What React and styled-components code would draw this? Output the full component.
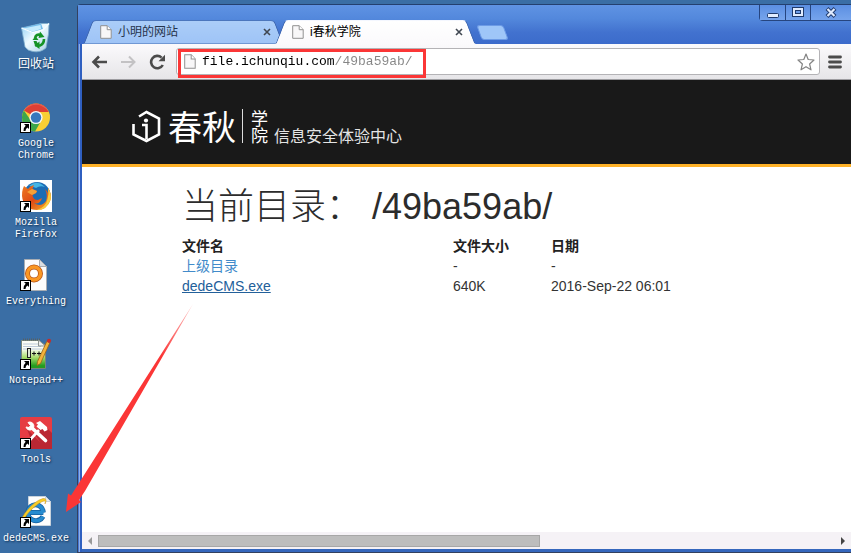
import React from "react";
import styled, { createGlobalStyle, css } from "styled-components";

const GlobalStyle = createGlobalStyle`
  *, *::before, *::after { box-sizing: border-box; }
  body {
    margin: 0;
    background: #3a6ea5;
    font-family: "Liberation Sans", "Noto Sans CJK SC", sans-serif;
    font-size: 14px;
  }
  button, input { font: inherit; color: inherit; margin: 0; padding: 0; border: 0; background: none; }
  svg { display: block; flex: none; }
`;

const Desktop = styled.div`
  position: relative;
  display: flex;
  height: 100vh;
  overflow: hidden;
  background: #3a6ea5;
`;

const IconColumn = styled.nav`
  display: flex;
  flex-direction: column;
  flex: none;
  width: 72px;
  margin-right: 5px;
  padding-top: 22px;
`;

const Shortcut = styled.button`
  display: flex;
  flex-direction: column;
  align-items: center;
  gap: 5px;
  min-height: 79px;
  &:last-child { min-height: 0; }
`;

const ShortcutLabel = styled.span`
  font-family: "Liberation Mono", "Noto Sans CJK SC", monospace;
  font-size: ${(p) => (p.$cjk ? "12px" : "10px")};
  line-height: 12px;
  color: #fff;
  text-shadow: 1px 1px 2px #0a2a4c;
`;

const BrowserWindow = styled.main`
  display: flex;
  flex-direction: column;
  flex: 1;
  min-width: 0;
  margin-top: 4px;
  border-left: 1px solid #33415f;
  border-top: 1px solid #24406f;
  border-bottom: 1px solid #33415f;
  border-top-left-radius: 4px;
  padding: 0 0 3px 4px;
  background: linear-gradient(90deg, #4a78d4 0 1px, #8fb0e8 1px 2px, #2f5fc0 2px 4px, #3567bd 4px);
`;

const TabStrip = styled.header`
  display: flex;
  align-items: flex-end;
  height: 39px;
  margin-left: -4px;
  padding-left: 10px;
  background: linear-gradient(#5f93e3, #5388dc 35%, #4272cf 70%, #3c6bcb);
`;

const Tabs = styled.div`
  display: flex;
  align-items: flex-end;
  gap: 1px;
`;

const tabSide = css`
  content: "";
  position: absolute;
  z-index: -1;
  top: 0;
  bottom: 0;
  width: 54%;
  border-top: 1px solid ${(p) => (p.$active ? "#f4f7ff" : "#4b76bd")};
  border-bottom: 1px solid ${(p) => (p.$active ? "#fbfafc" : "#7098d4")};
  background: ${(p) => (p.$active ? "linear-gradient(#fff, #fbfafc)" : "linear-gradient(#abcdf8, #9fc4f6)")};
`;

const Tab = styled.div`
  position: relative;
  z-index: ${(p) => (p.$active ? 2 : 1)};
  display: flex;
  align-items: center;
  gap: 6px;
  width: 191px;
  height: 24px;
  padding: 0 8px 0 12px;
  font-size: 12px;
  line-height: 16px;
  color: ${(p) => (p.$active ? "#000" : "#26344c")};
  &::before {
    ${tabSide}
    left: 0;
    transform: skewX(-21deg);
    border-top-left-radius: 4px;
    border-left: 1px solid #4066aa;
  }
  &::after {
    ${tabSide}
    right: 0;
    transform: skewX(21deg);
    border-top-right-radius: 4px;
    border-right: 1px solid #4066aa;
  }
`;

const TabTitle = styled.span`
  flex: 1;
  white-space: nowrap;
`;

const PlainButton = styled.button`
  display: flex;
  align-items: center;
  justify-content: center;
  flex: none;
`;

const NewTab = styled.button`
  width: 27px;
  height: 15px;
  margin: 0 0 4px 8px;
  border: 1px solid #6d9be6;
  border-radius: 3px;
  background: #9fc6f8;
  transform: skewX(20deg);
`;

const WindowControls = styled.div`
  display: flex;
  align-self: flex-start;
  margin-left: auto;
  border-left: 1px solid #26457f;
  border-bottom: 1px solid #26457f;
  border-bottom-left-radius: 4px;
`;

const ControlButton = styled.button`
  display: flex;
  align-items: center;
  justify-content: center;
  width: ${(p) => (p.$wide ? "41px" : "25px")};
  height: 15px;
  background: linear-gradient(#5b8fe2, #76a4ec);
  & + & { border-left: 1px solid #26457f; }
`;

const Toolbar = styled.div`
  display: flex;
  align-items: center;
  height: 36px;
  padding: 0 9px;
  border-bottom: 1px solid #9d9ca0;
  background: linear-gradient(#fbfafc, #e6e5e8);
`;

const NavButtons = styled.div`
  display: flex;
  gap: 12px;
  margin-right: 10px;
`;

const AddressBar = styled.form`
  position: relative;
  display: flex;
  align-items: center;
  flex: 1;
  min-width: 0;
  gap: 6px;
  height: 27px;
  margin-right: 8px;
  padding: 0 4px 0 7px;
  border: 1px solid #b4b3b6;
  border-radius: 3px;
  background: #fff;
`;

const UrlInput = styled.input`
  flex: 1;
  min-width: 0;
  height: 22px;
  font-family: "Liberation Mono", monospace;
  font-size: 13px;
  line-height: 22px;
  color: #000;
  outline: 0;
  background: linear-gradient(90deg, #000 17ch, #858585 17ch);
  background-clip: text;
  -webkit-text-fill-color: transparent;
`;

const UrlHighlight = styled.span`
  position: absolute;
  top: 0;
  left: 1px;
  width: 248px;
  height: 29px;
  border: 3px solid #fb3636;
  pointer-events: none;
`;

const SiteHeader = styled.header`
  display: flex;
  align-items: flex-start;
  flex: none;
  height: 87px;
  padding: 29px 0 0 50px;
  border-bottom: 3px solid #ffb228;
  background: #191919;
  color: #fff;
  font-family: "Noto Sans CJK SC", sans-serif;
  font-weight: 300;
  white-space: nowrap;
`;

const Brand = styled.span`
  margin-left: 6px;
  padding-right: 6px;
  border-right: 1px solid #ddd;
  font-size: 34px;
  font-weight: 400;
  line-height: 34px;
`;

const BrandSuffix = styled.span`
  width: 17px;
  margin: 0 6px 0 8px;
  font-size: 17px;
  line-height: 17px;
  font-weight: 400;
  white-space: normal;
`;

const Tagline = styled.span`
  align-self: flex-start;
  margin-top: 18px;
  font-size: 16px;
  line-height: 17px;
  font-weight: 400;
  color: #e4e4e4;
`;

const Page = styled.section`
  flex: 1;
  min-height: 0;
  padding: 20px 20px 0 100px;
  overflow: hidden;
  background: #fff;
  color: #333;
`;

const Heading = styled.h1`
  margin: 0 0 9px;
  font-size: 36px;
  font-weight: 300;
  line-height: 40px;
  color: #2c2c2c;
`;

const FileTable = styled.table`
  border-collapse: collapse;
  line-height: 20px;
  text-align: left;
  th, td { padding: 0; height: 20px; line-height: 20px; }
  th { color: #222; font-weight: 700; }
  th:nth-child(1) { width: 271px; }
  th:nth-child(2) { width: 98px; }
`;

const FileLink = styled.a`
  color: ${(p) => (p.$hovered ? "#23609a" : "#428bca")};
  text-decoration: ${(p) => (p.$hovered ? "underline" : "none")};
`;

const ScrollBar = styled.div`
  display: flex;
  align-items: center;
  flex: none;
  height: 17px;
  background: #f5f2f6;
`;

const ScrollButton = styled(PlainButton)`
  width: 16px;
  height: 17px;
`;

const ScrollTrack = styled.div`
  flex: 1;
`;

const ScrollThumb = styled.div`
  width: 60%;
  height: 12px;
  border: 1px solid #a7a7a7;
  background: #bdbdbd;
`;

const ArrowOverlay = styled.svg`
  position: absolute;
  left: 66px;
  top: 304px;
  pointer-events: none;
`;

const ShortcutMark = () => (
  <g>
    <rect x="0.5" y="21.5" width="10" height="10" fill="#fff" stroke="#000" />
    <path d="M4 23h5v5l-1.500-1.500Q5.500 27.500 5.500 30H3.500Q3 27 5.700 24.800Z" fill="#000" />
  </g>
);

const RecycleIcon = () => (
  <svg width="32" height="32" viewBox="0 0 32 32">
    <defs>
      <linearGradient id="bin" x1="0" x2="1" y2="1">
        <stop offset="0" stopColor="#8fd0f5" />
        <stop offset="0.45" stopColor="#eefaff" />
        <stop offset="1" stopColor="#a9cfe6" />
      </linearGradient>
    </defs>
    <path d="M1.500 6 21 1.500 29 1.500 28.500 12 26 26Q20 31 13 29.500 8 29 5 25Z" fill="url(#bin)" stroke="#7caccc" strokeWidth="0.800" />
    <path d="M1.500 6 21 1.500 23 7 13 11Z" fill="#73bcec" />
    <path d="M3 6.500 20.500 3 21 7 13 9.500Z" fill="#c6ebfd" />
    <path d="M1.500 6 13 10.500 23 8 29 1.500" fill="none" stroke="#f5fcff" strokeWidth="1.300" />
    <g fill="none" stroke="#159326" strokeWidth="2.600">
      <path d="M15 16q1-4.500 6-3" />
      <path d="M24 17q0 5-4 6.500h-2" />
    </g>
    <path d="m20 9.500 4.500 5.500-6 1zM19.500 19.500v7.500l-5-3.500zM12.500 18l3-4 3 4zM13.500 19h3l2 4-3 2z" fill="#159326" />
  </svg>
);

const ChromeIcon = () => (
  <svg width="32" height="32" viewBox="0 0 32 32">
    <circle cx="16" cy="16.500" r="14" fill="#f8cf35" />
    <path d="M16 16.500 3.900 9.500A14 14 0 0 1 28.800 11H16Z" fill="#dd3f34" />
    <path d="M3.900 9.500A14 14 0 0 0 15 30.500L21 20 16 16.500 10.500 19Z" fill="#3da64b" />
    <path d="M4 9.500A14 14 0 0 1 28 9.500Q16-2 4 9.500Z" fill="#ee7468" opacity=".6" />
    <circle cx="16" cy="16.500" r="6.600" fill="#f5f7fa" />
    <circle cx="16" cy="16.500" r="5.200" fill="#3777bd" />
    <ShortcutMark />
  </svg>
);

const FirefoxIcon = () => (
  <svg width="32" height="32" viewBox="0 0 32 32">
    <defs>
      <linearGradient id="fox" x1="0" y1="0" x2="1" y2="1">
        <stop offset="0" stopColor="#ee7b20" />
        <stop offset="0.5" stopColor="#df4a16" />
        <stop offset="1" stopColor="#f5b728" />
      </linearGradient>
    </defs>
    <rect width="32" height="32" fill="#fff" />
    <circle cx="17" cy="15.500" r="13.500" fill="#1c6cb4" />
    <path d="M9 6Q17-1 25 7 20 5 16 8 12 6 9 6Z" fill="#46b5e5" />
    <path d="M4 6 8 9Q10 6 14 5L12.500 9 17 11 16 13 12.500 15Q13 20 18 20L22 18Q20 25 14 23 21 28 26 21 28 15 25 9 27 11 28 13L28 8Q32 14 30.500 20 27 30 17 30 5 30 2.500 19 1 12 4 6Z" fill="url(#fox)" />
    <path d="M28 8Q32 14 30.500 20 27 30 17 30 26 27 27.500 19 29 14 28 8Z" fill="#f9cb3b" />
    <path d="m7 12 5-3 5 2-1 2-4 2Z" fill="#f6a137" />
    <ShortcutMark />
  </svg>
);

const EverythingIcon = () => (
  <svg width="32" height="32" viewBox="0 0 32 32">
    <path d="M4.500.5h15l7 7v24h-22Z" fill="#fcfcfc" stroke="#a8adb3" />
    <path d="M19.500.5v7h7Z" fill="#d9dde2" stroke="#a8adb3" />
    <circle cx="14" cy="14.500" r="6.500" fill="#fff" stroke="#b65418" strokeWidth="5" />
    <circle cx="14" cy="14.500" r="6.500" fill="none" stroke="#fa9723" strokeWidth="3.400" />
    <ShortcutMark />
  </svg>
);

const NotepadIcon = () => (
  <svg width="32" height="32" viewBox="0 0 32 32">
    <defs>
      <linearGradient id="note" x1="0" y1="0" x2="0" y2="1">
        <stop offset="0.3" stopColor="#fbfdf6" />
        <stop offset="0.6" stopColor="#a8dd6c" />
        <stop offset="0.9" stopColor="#249b20" />
      </linearGradient>
    </defs>
    <path d="M1.500 2.500h17l7 5v23h-24Z" fill="url(#note)" stroke="#77857a" />
    <path d="M3 1.500h17" stroke="#576064" strokeWidth="2" strokeDasharray="1 1" />
    <path d="M3 6h17M3 8.500h18M3 11h20" stroke="#bdcad9" />
    <path d="M18.500 2v6h7Z" fill="#eee" stroke="#8b938d" />
    <rect x="7.500" y="10.500" width="3" height="9" fill="#d9e5d2" stroke="#222" />
    <path d="M12 15.500h4m-2-2v4m3-2h4m-2-2v4" stroke="#111" />
    <path d="m27 3 3 1.500-9.500 21-3.500 2 .5-4Z" fill="#f3b33a" stroke="#9a6213" strokeWidth=".8" />
    <circle cx="29" cy="2.800" r="2.100" fill="#c42d2a" />
    <ShortcutMark />
  </svg>
);

const ToolsIcon = () => (
  <svg width="32" height="32" viewBox="0 0 32 32">
    <rect width="32" height="32" rx="2" fill="#e63c43" />
    <path d="M7 12 27 32H10V20ZM24 8l8 8v16h-7L13 15Z" fill="#ba2733" />
    <path d="m12 11 13.500 12.500" stroke="#fff" strokeWidth="3.600" strokeLinecap="round" />
    <path d="M8 5.500a4 4 0 1 1-2 4.500l3 .5 1.500-2Z" fill="#fff" stroke="#fff" />
    <path d="M19 13 8.500 24.500" stroke="#fff" strokeWidth="2.600" />
    <path d="m16 6 4-2 7 6 .5 3-3 1.500-2-2.500-2 1-4-3.500 1.500-2Z" fill="#fff" />
    <ShortcutMark />
  </svg>
);

const ExplorerIcon = () => (
  <svg width="32" height="32" viewBox="0 0 32 32">
    <path d="M8.500.5h17l5 5v24h-22Z" fill="#fdfdfd" stroke="#c9d3dc" />
    <path d="M25.500.5v5h5Z" fill="#e7edf2" stroke="#c9d3dc" />
    <path d="M23.300 16.500H9M8 16A7.700 8.500 0 0 1 23.300 16.500M23 20.500A8 8 0 0 1 8 16" fill="none" stroke="#155f9f" strokeWidth="5" />
    <path d="M23.300 16.500H9M8 16A7.700 8.500 0 0 1 23.300 16.500M23 20.500A8 8 0 0 1 8 16" fill="none" stroke="#258bd0" strokeWidth="3.500" />
    <path d="M2.500 30Q-2 27 5 17 14 5 23 2.500 28 2 25 8 27 2 18 8 6 17 3 26Z" fill="#f8cc27" stroke="#c9951d" strokeWidth=".5" />
    <ShortcutMark />
  </svg>
);

const PageIcon = ({ tall }) => (
  <svg width="12" height={tall ? 15 : 14} viewBox="0 0 12 14" preserveAspectRatio="none">
    <path d="M.7.700h6.500l4 4v8.600H.7Z" fill="#f8f7f8" stroke="#919191" />
    <path d="M7.200.7v4h4" fill="#fff" stroke="#919191" />
  </svg>
);

const CloseIcon = () => (
  <svg width="8" height="8" viewBox="0 0 8 8">
    <path d="m1 1 6 6m0-6L1 7" stroke="#404751" strokeWidth="1.600" />
  </svg>
);

const ArrowIcon = ({ forward }) => (
  <svg width="17" height="16" viewBox="0 0 17 16">
    <path
      d={forward ? "M1 8h13M9 2.500 14.500 8 9 13.500" : "M16 8H3M8 2.500 2.500 8 8 13.500"}
      fill="none"
      stroke={forward ? "#c3c2c4" : "#4b4b4b"}
      strokeWidth={forward ? 2 : 2.6}
    />
  </svg>
);

const ReloadIcon = () => (
  <svg width="17" height="16" viewBox="0 0 17 16">
    <path d="M13.800 11A6.200 6.200 0 1 1 12.600 3.600" fill="none" stroke="#4b4b4b" strokeWidth="2.600" />
    <path d="M16 .8v6.500H9.500Z" fill="#4b4b4b" />
  </svg>
);

const LogoMark = () => (
  <svg width="30" height="34" viewBox="0 0 30 34">
    <path d="M7 7.500 14.500 3 27 9.500v16L14.500 32 1.500 25.500V15" fill="none" stroke="#fff" strokeWidth="2.600" />
    <circle cx="14" cy="11.500" r="2.100" fill="#fff" />
    <path d="M10 16h4.500v14" fill="none" stroke="#fff" strokeWidth="2.600" />
  </svg>
);

const shortcuts = [
  { name: "回收站", Icon: RecycleIcon, cjk: true },
  { name: "Google Chrome", Icon: ChromeIcon },
  { name: "Mozilla Firefox", Icon: FirefoxIcon },
  { name: "Everything", Icon: EverythingIcon },
  { name: "Notepad++", Icon: NotepadIcon },
  { name: "Tools", Icon: ToolsIcon },
  { name: "dedeCMS.exe", Icon: ExplorerIcon },
];

const tabs = [
  { title: "小明的网站", active: false },
  { title: "i春秋学院", active: true },
];

const files = [
  { name: "上级目录", size: "-", date: "-" },
  { name: "dedeCMS.exe", size: "640K", date: "2016-Sep-22 06:01", hovered: true },
];

export default function App() {
  return (
    <Desktop>
      <GlobalStyle />
      <IconColumn aria-label="Desktop">
        {shortcuts.map(({ name, Icon, cjk }) => (
          <Shortcut key={name} type="button">
            <Icon />
            <ShortcutLabel $cjk={cjk}>{name}</ShortcutLabel>
          </Shortcut>
        ))}
      </IconColumn>

      <BrowserWindow>
        <TabStrip>
          <Tabs>
            {tabs.map((tab) => (
              <Tab key={tab.title} $active={tab.active}>
                <PageIcon />
                <TabTitle>{tab.title}</TabTitle>
                <PlainButton type="button" aria-label="Close tab"><CloseIcon /></PlainButton>
              </Tab>
            ))}
          </Tabs>
          <NewTab type="button" aria-label="New tab" />
          <WindowControls>
            <ControlButton type="button" aria-label="Minimize">
              <svg width="12" height="12" viewBox="0 0 12 12">
                <rect x=".5" y="6.500" width="11" height="4" rx="1" fill="#e0ecff" stroke="#1f3a6b" />
              </svg>
            </ControlButton>
            <ControlButton type="button" aria-label="Maximize">
              <svg width="12" height="11" viewBox="0 0 12 11">
                <rect x=".5" y=".5" width="11" height="9" fill="#e0ecff" stroke="#1f3a6b" />
                <rect x="3.500" y="3.500" width="5" height="3" fill="#6e9de8" stroke="#1f3a6b" />
              </svg>
            </ControlButton>
            <ControlButton type="button" aria-label="Close" $wide>
              <svg width="12" height="11" viewBox="0 0 12 11">
                <path d="m2 1.500 8 8m0-8-8 8" stroke="#1f3a6b" strokeWidth="4" />
                <path d="m2.500 2 7 7m0-7-7 7" stroke="#e0ecff" strokeWidth="2.200" />
              </svg>
            </ControlButton>
          </WindowControls>
        </TabStrip>

        <Toolbar>
          <NavButtons>
            <PlainButton type="button" aria-label="Back"><ArrowIcon /></PlainButton>
            <PlainButton type="button" aria-label="Forward"><ArrowIcon forward /></PlainButton>
            <PlainButton type="button" aria-label="Reload"><ReloadIcon /></PlainButton>
          </NavButtons>
          <AddressBar>
            <PageIcon tall />
            <UrlInput aria-label="Address" type="text" defaultValue="file.ichunqiu.com/49ba59ab/" spellCheck={false} />
            <PlainButton type="button" aria-label="Bookmark">
              <svg width="18" height="18" viewBox="0 0 18 18">
                <path d="M9 1 11.200 6.500 17 7 12.600 11 14 16.800 9 13.700 4 16.800 5.400 11 1 7 6.800 6.500Z" fill="#fff" stroke="#838383" strokeWidth="1.200" strokeLinejoin="round" />
              </svg>
            </PlainButton>
            <UrlHighlight />
          </AddressBar>
          <PlainButton type="button" aria-label="Menu">
            <svg width="14" height="14" viewBox="0 0 14 14">
              <path d="M1.500 2h11M1.500 7h11M1.500 12h11" stroke="#4b4b4b" strokeWidth="2.800" strokeLinecap="round" />
            </svg>
          </PlainButton>
        </Toolbar>

        <SiteHeader>
          <LogoMark />
          <Brand>春秋</Brand>
          <BrandSuffix>学院</BrandSuffix>
          <Tagline>信息安全体验中心</Tagline>
        </SiteHeader>

        <Page>
          <Heading>当前目录： /49ba59ab/</Heading>
          <FileTable>
            <thead>
              <tr><th>文件名</th><th>文件大小</th><th>日期</th></tr>
            </thead>
            <tbody>
              {files.map((file) => (
                <tr key={file.name}>
                  <td><FileLink href="#" $hovered={file.hovered}>{file.name}</FileLink></td>
                  <td>{file.size}</td>
                  <td>{file.date}</td>
                </tr>
              ))}
            </tbody>
          </FileTable>
        </Page>

        <ScrollBar>
          <ScrollButton type="button" aria-label="Scroll left">
            <svg width="4" height="8" viewBox="0 0 4 8"><path d="M4 0v8L0 4Z" fill="#9a9a9a" /></svg>
          </ScrollButton>
          <ScrollTrack><ScrollThumb /></ScrollTrack>
          <ScrollButton type="button" aria-label="Scroll right">
            <svg width="4" height="8" viewBox="0 0 4 8"><path d="M0 0v8l4-4Z" fill="#454545" /></svg>
          </ScrollButton>
        </ScrollBar>
      </BrowserWindow>

      <ArrowOverlay width="128" height="210" viewBox="0 0 128 210">
        <defs>
          <linearGradient id="shaft" x1="1" y1="0" x2="0.750" y2="0.250">
            <stop offset="0" stopColor="#fb3636" stopOpacity="0.300" />
            <stop offset="1" stopColor="#fb3636" />
          </linearGradient>
        </defs>
        <path d="M0 208 2 189.500 5 191.500 127 0 19 187 13 196 15 198Z" fill="url(#shaft)" />
      </ArrowOverlay>
    </Desktop>
  );
}
